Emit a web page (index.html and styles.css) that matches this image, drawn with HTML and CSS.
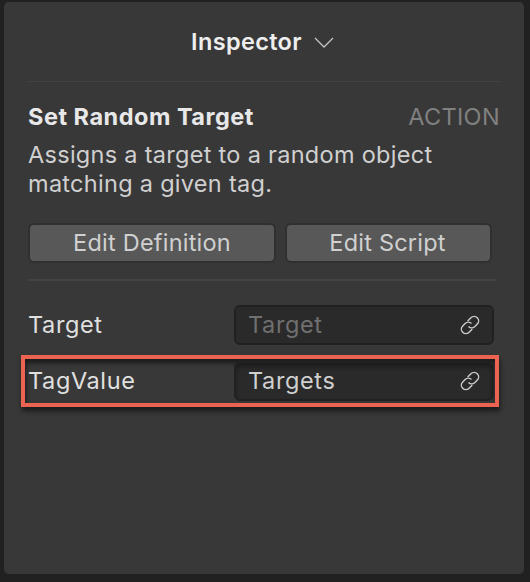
FILE: index.html
```html
<!DOCTYPE html>
<html lang="en">
<head>
<meta charset="utf-8">
<title>Inspector</title>
<link rel="stylesheet" href="styles.css">
</head>
<body>
<main class="panel">
  <header class="header">
    <h1 class="title">Inspector</h1>
    <svg class="chevron" viewBox="0 0 20 12"><path d="M1 1 L10 10 L19 1"/></svg>
  </header>
  <section class="node">
    <div class="node-head">
      <h2 class="name">Set Random Target</h2>
      <span class="kind">ACTION</span>
    </div>
    <p class="description"><span class="line">Assigns a target to a random object</span><span class="line">matching a given tag.</span></p>
    <div class="buttons">
      <button class="button definition">Edit Definition</button>
      <button class="button script">Edit Script</button>
    </div>
  </section>
  <section class="fields">
    <div class="row">
      <span class="label">Target</span>
      <div class="input empty"><span class="value">Target</span>
        <svg class="link" viewBox="-11 -11 22 22"><g transform="rotate(-45)"><path d="M1.2 -4.5H5.8a4.5 4.5 0 0 1 0 9H2.4A4.5 4.5 0 0 1-2.1 0"/><path d="M-1.2 4.5H-5.8a4.5 4.5 0 0 1 0-9H-2.4A4.5 4.5 0 0 1 2.1 0"/></g></svg>
      </div>
    </div>
    <div class="row highlighted">
      <span class="label">TagValue</span>
      <div class="input"><span class="value">Targets</span>
        <svg class="link" viewBox="-11 -11 22 22"><g transform="rotate(-45)"><path d="M1.2 -4.5H5.8a4.5 4.5 0 0 1 0 9H2.4A4.5 4.5 0 0 1-2.1 0"/><path d="M-1.2 4.5H-5.8a4.5 4.5 0 0 1 0-9H-2.4A4.5 4.5 0 0 1 2.1 0"/></g></svg>
      </div>
    </div>
  </section>
</main>
</body>
</html>
```
FILE: styles.css
```css
* { box-sizing: border-box; }
body {
  margin: 0;
  height: 582px;
  padding: 2px 6px 8px 4px;
  background: #212121;
  font: 400 23.5px/29px Inter, "Liberation Sans", sans-serif;
  letter-spacing: .22px;
  color: #d0d0d0;
  overflow: hidden;
}
h1, h2, p { margin: 0; font-size: inherit; }
.panel {
  height: 572px;
  padding: 0 24px;
  background: #383838;
  border-radius: 5px;
}
.header {
  display: flex;
  justify-content: center;
  align-items: center;
  gap: 12px;
  height: 80px;
  padding-right: 3px;
  border-bottom: 1px solid #434343;
}
.title { font-weight: 600; color: #eee; letter-spacing: .34px; }
.chevron { width: 20px; height: 12px; margin-top: 2px; fill: none; stroke: #c4c4c4; stroke-width: 1.3; }
.node { height: 199px; padding-top: 20px; border-bottom: 2px solid #434343; margin-right: 3px; }
.node-head { display: flex; justify-content: space-between; margin-right: -3px; height: 38px; }
.name { font-weight: 700; color: #e8e8e8; letter-spacing: .5px; }
.kind { color: #808080; letter-spacing: .35px; }
.line { display: block; white-space: nowrap; letter-spacing: .29px; }
.buttons { display: flex; gap: 9px; margin-top: 25px; }
.button {
  height: 40px;
  padding: 0 2px 2px 0;
  border: 2px solid #303030;
  border-radius: 6px;
  background: #585858;
  color: #d0d0d0;
  font: inherit;
  letter-spacing: inherit;
  white-space: nowrap;
}
.definition { width: 248px; padding-right: 0; }
.script { width: 207px; }
.fields { padding-top: 24px; }
.row { display: flex; align-items: center; justify-content: space-between; height: 40px; margin-right: 6px; color: #e0e0e0; }
.label, .value { letter-spacing: .62px; margin-top: -1px; }
.input {
  display: flex;
  align-items: center;
  justify-content: space-between;
  width: 260px;
  height: 40px;
  padding: 0 11px 0 12px;
  border: 2px solid #212121;
  border-radius: 6px;
  background: #2a2a2a;
  color: #d0d0d0;
}
.empty .value { color: #707070; }
.link { width: 22px; height: 22px; fill: none; stroke: #c8c8c8; stroke-width: 1.5; }
.highlighted {
  height: 52px;
  margin: 10px 1px 0 -7px;
  padding: 0 1px 0 3px;
  border: 4px solid #ed6352;
  box-shadow: 1px 4px 5px rgba(0, 0, 0, .55), inset 1px 4px 5px rgba(0, 0, 0, .55);
}
.highlighted .input { box-shadow: inset 0 4px 4px rgba(0, 0, 0, .35); }
```
